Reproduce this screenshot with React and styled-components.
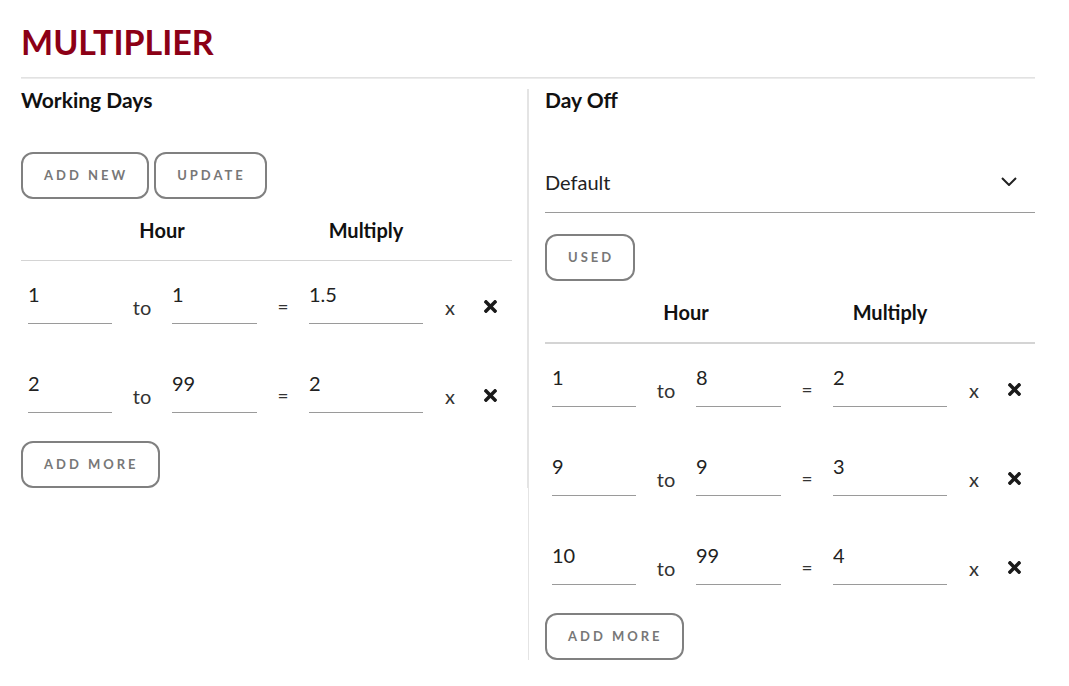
import React from 'react';
import styled, { createGlobalStyle } from 'styled-components';
import { FaTimes } from 'react-icons/fa';

const GlobalStyle = createGlobalStyle`
  * { box-sizing: border-box; }
  body {
    margin: 0;
    background: #fff;
    font-family: Lato, "Open Sans", sans-serif;
    color: #222;
  }
`;

const Page = styled.div`
  width: 1014px;
  margin-left: 21px;
  padding-top: 22px;
`;

const Title = styled.h1`
  margin: 0;
  font-size: 34px;
  line-height: 1.2;
  font-weight: 700;
  color: #8c0016;
`;

const Rule = styled.hr`
  margin: 14px 0 10px;
  height: 1px;
  border: 0;
  border-top: 1px solid #e2e2e2;
  border-bottom: 1px solid #ececec;
`;

const Columns = styled.div`
  display: grid;
  grid-template-columns: 1fr 1fr;
  align-items: start;
`;

const Column = styled.section`
  ${p => p.$right
    ? 'border-left: 1px solid #e4e4e4; padding-left: 16px;'
    : 'border-right: 1px solid #e4e4e4; padding-right: 15px;'}
`;

const SectionTitle = styled.h2`
  margin: -2px 0 0;
  font-size: 21px;
  line-height: 25px;
  font-weight: 700;
  color: #111;
`;

const ButtonBar = styled.div`
  display: flex;
  gap: 5px;
  margin-top: ${p => p.$top || 0}px;
`;

const OutlineButton = styled.button`
  height: 47px;
  padding: 0 19px 0 21px;
  background: #fff;
  border: 2px solid #808080;
  border-radius: 12px;
  font-family: inherit;
  font-size: 13px;
  font-weight: 700;
  letter-spacing: 3px;
  text-transform: uppercase;
  color: #777;
  cursor: pointer;
`;

const SelectBox = styled.div`
  margin-top: 42px;
  display: flex;
  align-items: center;
  justify-content: space-between;
  padding: 16px 18px 18px 0;
  border-bottom: 1px solid #9a9a9a;
  font-size: 20px;
  line-height: 24px;
  color: #222;
`;

const HeaderRow = styled.div`
  display: grid;
  grid-template-columns: 282px 126px;
  margin-top: 19px;
  padding-bottom: 18px;
  border-bottom: ${p => p.$thick ? 2 : 1}px solid #d4d4d4;
`;

const HeaderCell = styled.div`
  text-align: center;
  font-size: 20px;
  line-height: 24px;
  font-weight: 700;
  color: #111;
`;

const Row = styled.div`
  display: flex;
  align-items: flex-end;
  padding: 21px 0 26px 7px;
`;

const Field = styled.input`
  width: ${p => p.$w}px;
  height: 42px;
  padding: 0 0 17px 0;
  border: 0;
  border-bottom: 1px solid #9a9a9a;
  background: transparent;
  font-family: inherit;
  font-size: 20px;
  line-height: 24px;
  color: #222;
  outline: none;
`;

const Cell = styled.div`
  width: ${p => p.$w}px;
  margin-bottom: 5px;
  display: flex;
  align-items: center;
  justify-content: center;
  height: 24px;
  font-size: ${p => p.$size || 20}px;
  color: #333;
`;

const Chevron = () => (
  <svg width="16" height="9" viewBox="0 0 16 9">
    <polyline points="1,1 8,8 15,1" fill="none" stroke="#222" strokeWidth="2" />
  </svg>
);

function MultiplierRow({ from, to, value }) {
  return (
    <Row>
      <Field $w={84} defaultValue={from} />
      <Cell $w={60}>to</Cell>
      <Field $w={85} defaultValue={to} />
      <Cell $w={52} $size={19}>=</Cell>
      <Field $w={114} defaultValue={value} />
      <Cell $w={54}>x</Cell>
      <Cell $w={26}><FaTimes size={19} color="#1a1a1a" /></Cell>
    </Row>
  );
}

function RateTable({ rows, thick }) {
  return (
    <>
      <HeaderRow $thick={thick}>
        <HeaderCell>Hour</HeaderCell>
        <HeaderCell>Multiply</HeaderCell>
      </HeaderRow>
      {rows.map((r, i) => (
        <MultiplierRow key={i} from={r[0]} to={r[1]} value={r[2]} />
      ))}
      <ButtonBar $top={2}>
        <OutlineButton>Add More</OutlineButton>
      </ButtonBar>
    </>
  );
}

const workingRows = [[1, 1, 1.5], [2, 99, 2]];
const dayOffRows = [[1, 8, 2], [9, 9, 3], [10, 99, 4]];

export default function App() {
  return (
    <Page>
      <GlobalStyle />
      <Title>MULTIPLIER</Title>
      <Rule />
      <Columns>
        <Column>
          <SectionTitle>Working Days</SectionTitle>
          <ButtonBar $top={40}>
            <OutlineButton>Add New</OutlineButton>
            <OutlineButton>Update</OutlineButton>
          </ButtonBar>
          <RateTable rows={workingRows} />
        </Column>
        <Column $right>
          <SectionTitle>Day Off</SectionTitle>
          <SelectBox>
            <span>Default</span>
            <Chevron />
          </SelectBox>
          <ButtonBar $top={21}>
            <OutlineButton>Used</OutlineButton>
          </ButtonBar>
          <RateTable rows={dayOffRows} thick />
        </Column>
      </Columns>
    </Page>
  );
}
